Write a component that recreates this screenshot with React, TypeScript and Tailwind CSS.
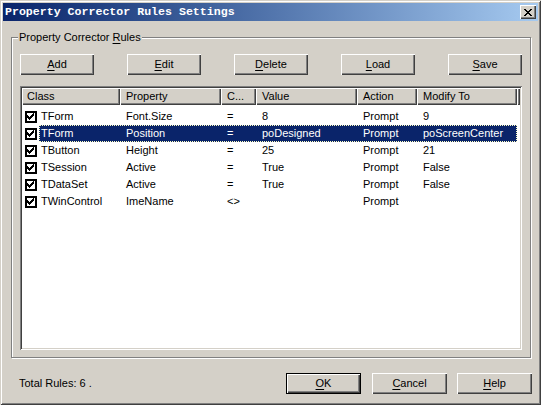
import React from "react";

const face = "font-['Liberation_Sans',Arial,sans-serif] text-[11px] leading-[13px] text-black";
const raised =
  "bg-[#d4d0c8] shadow-[inset_1px_1px_0_#fff,inset_-1px_-1px_0_#404040,inset_-2px_-2px_0_#808080]";

const columns = [
  { label: "Class", w: "w-[98px]", pad: "pl-[5px]" },
  { label: "Property", w: "w-[101px]", pad: "pl-[6px]" },
  { label: "C...", w: "w-[35px]", pad: "pl-[6px]" },
  { label: "Value", w: "w-[101px]", pad: "pl-[6px]" },
  { label: "Action", w: "w-[60px]", pad: "pl-[6px]" },
  { label: "Modify To", w: "w-[100px]", pad: "pl-[6px]" },
];

const rules = [
  ["TForm", "Font.Size", "=", "8", "Prompt", "9"],
  ["TForm", "Position", "=", "poDesigned", "Prompt", "poScreenCenter"],
  ["TButton", "Height", "=", "25", "Prompt", "21"],
  ["TSession", "Active", "=", "True", "Prompt", "False"],
  ["TDataSet", "Active", "=", "True", "Prompt", "False"],
  ["TWinControl", "ImeName", "<>", "", "Prompt", ""],
];

// classic 7x7 check mark, one 3px column per x
const checkCols = [2, 3, 4, 3, 2, 1, 0];

function CheckBox() {
  return (
    <svg width="12" height="12" viewBox="0 0 12 12" shapeRendering="crispEdges" className="block">
      <rect x="0" y="0" width="12" height="12" fill="#000" />
      <rect x="2" y="2" width="8" height="8" fill="#fff" />
      {checkCols.map((y, x) => (
        <rect key={x} x={2 + x} y={2 + y} width="1" height="3" fill="#000" />
      ))}
    </svg>
  );
}

function CloseGlyph() {
  const px = [
    [0, 0], [1, 0], [6, 0], [7, 0],
    [1, 1], [2, 1], [5, 1], [6, 1],
    [2, 2], [3, 2], [4, 2], [5, 2],
    [3, 3], [4, 3],
    [2, 4], [3, 4], [4, 4], [5, 4],
    [1, 5], [2, 5], [5, 5], [6, 5],
    [0, 6], [1, 6], [6, 6], [7, 6],
  ];
  return (
    <svg width="8" height="7" viewBox="0 0 8 7" shapeRendering="crispEdges" className="block">
      {px.map(([x, y], i) => (
        <rect key={i} x={x} y={y} width="1" height="1" fill="#000" />
      ))}
    </svg>
  );
}

function Button({ k, rest, def, w }: { k: string; rest: string; def?: boolean; w: string }) {
  return (
    <div
      className={`${raised} ${w} h-[21px] shrink-0 flex items-center justify-center ${
        def ? "border border-black" : ""
      }`}
    >
      <span>
        <span className="underline decoration-1 underline-offset-[2px]">{k}</span>
        {rest}
      </span>
    </div>
  );
}

export default function App() {
  return (
    <div
      className={`${face} w-[541px] h-[405px] bg-[#d4d0c8] p-[3px] flex flex-col shadow-[inset_1px_1px_0_#d4d0c8,inset_-1px_-1px_0_#404040,inset_2px_2px_0_#fff,inset_-2px_-2px_0_#808080]`}
    >
      {/* title bar */}
      <div className="h-[18px] shrink-0 flex items-center justify-between bg-linear-to-r from-[#0a246a] to-[#a6caf0] pl-[2px] pr-[2px]">
        <span className="font-['Liberation_Mono',monospace] font-bold text-[11.6px] text-white leading-[14px]">
          Property Corrector Rules Settings
        </span>
        <div className={`${raised} w-[16px] h-[14px] flex items-center justify-center`}>
          <CloseGlyph />
        </div>
      </div>

      {/* group box */}
      <div className="relative ml-[8px] mt-[16px] w-[520px] h-[321px] border border-[#808080] shadow-[1px_1px_0_#fff,inset_1px_1px_0_#fff] pt-[16px] px-[8px] pb-[7px] flex flex-col">
        <span className="absolute -top-[7px] left-[6px] bg-[#d4d0c8] px-[1px]">
          Property Corrector <span className="underline decoration-1 underline-offset-[2px]">R</span>ules
        </span>

        <div className="flex justify-between">
          <Button k="A" rest="dd" w="w-[74px]" />
          <Button k="E" rest="dit" w="w-[74px]" />
          <Button k="D" rest="elete" w="w-[74px]" />
          <Button k="L" rest="oad" w="w-[74px]" />
          <Button k="S" rest="ave" w="w-[74px]" />
        </div>

        {/* list view */}
        <div className="mt-[11px] flex-1 bg-white p-[2px] shadow-[inset_1px_1px_0_#808080,inset_-1px_-1px_0_#fff,inset_2px_2px_0_#404040,inset_-2px_-2px_0_#d4d0c8]">
          <div className="flex h-[17px]">
            {columns.map((c) => (
              <div key={c.label} className={`${raised} ${c.w} ${c.pad} shrink-0 flex items-center`}>
                {c.label}
              </div>
            ))}
            <div className={`${raised} flex-1`} />
          </div>
          <div className="pt-[3px]">
            {rules.map((r, i) => {
              const sel = i === 1;
              return (
                <div key={i} className="flex h-[17px] items-center">
                  <div className="w-[17px] shrink-0 pl-[3px]">
                    <CheckBox />
                  </div>
                  <div
                    className={`flex h-full items-center ${
                      sel
                        ? "bg-[#0a246a] text-white outline-1 outline-dotted -outline-offset-1 outline-[#ffffc0]"
                        : ""
                    }`}
                  >
                    <div className="w-[81px] pl-[2px]">{r[0]}</div>
                    <div className="w-[101px] pl-[6px]">{r[1]}</div>
                    <div className="w-[35px] pl-[6px]">{r[2]}</div>
                    <div className="w-[101px] pl-[6px]">{r[3]}</div>
                    <div className="w-[60px] pl-[6px]">{r[4]}</div>
                    <div className="w-[100px] pl-[6px]">{r[5]}</div>
                  </div>
                </div>
              );
            })}
          </div>
        </div>
      </div>

      {/* bottom row */}
      <div className="mt-[15px] h-[21px] flex items-center pl-[16px] pr-[6px]">
        <span>Total Rules: 6 .</span>
        <div className="ml-auto flex">
          <Button k="O" rest="K" def w="w-[75px]" />
          <div className="ml-[11px]">
            <Button k="C" rest="ancel" w="w-[75px]" />
          </div>
          <div className="ml-[10px]">
            <Button k="H" rest="elp" w="w-[75px]" />
          </div>
        </div>
      </div>
    </div>
  );
}
